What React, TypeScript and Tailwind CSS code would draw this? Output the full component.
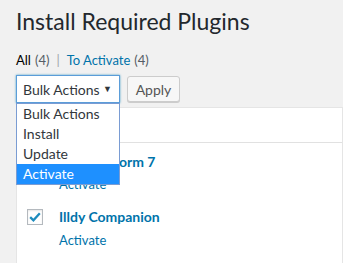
import React from "react"

const options = ["Bulk Actions", "Install", "Update", "Activate"]

function CheckIcon() {
  return (
    <svg viewBox="0 0 16 16" className="w-[14px] h-[14px]">
      <path d="M2.5 8.2 L6.2 11.8 L13.5 3.6" fill="none" stroke="#1e8cbe" strokeWidth="2.6" />
    </svg>
  )
}

export default function App() {
  return (
    <div className="relative w-[343px] h-[263px] overflow-hidden bg-[#f1f1f1] pl-4 text-[#23282d] font-['Lato',sans-serif]">
      <h1 className="pt-[6px] text-[23px] leading-[30px] font-normal">Install Required Plugins</h1>

      <div className="mt-[15px] flex items-center text-[13px] leading-[18px]">
        <span className="text-black">All</span>
        <span className="ml-1 text-[#555d66]">(4)</span>
        <span className="mx-[7px] text-[#a0a5aa]">|</span>
        <a className="text-[#0073aa]">To Activate</a>
        <span className="ml-1 text-[#555d66]">(4)</span>
      </div>

      <div className="mt-[6px] flex items-center gap-[7px]">
        <div className="w-[104px] h-[28px] flex items-center justify-between bg-white border border-[#5b9dd9] pl-[6px] pr-[7px] text-[14px] text-[#32373c] whitespace-nowrap shadow-[0_0_2px_rgba(30,140,190,0.8)]">
          <span>Bulk Actions</span>
          <span className="text-[9px] text-[#32373c]">▼</span>
        </div>
        <button className="w-[53px] h-[26px] rounded-[3px] border border-[#cccccc] bg-[#f7f7f7] text-[14px] text-[#555555] shadow-[0_1px_0_#cccccc]">
          Apply
        </button>
      </div>

      <div className="mt-[4px] bg-white border border-[#e5e5e5] h-[200px]">
        <div className="h-[35px] border-b border-[#e1e1e1]"></div>
        <div className="flex pt-[9px] h-[57px]">
          <div className="w-[42px]"></div>
          <div className="flex flex-col">
            <a className="text-[14px] leading-[20px] font-bold text-[#0073aa]">Contact Form 7</a>
            <a className="mt-[2px] text-[13px] leading-[20px] text-[#0073aa]">Activate</a>
          </div>
        </div>
        <div className="flex pt-[7px]">
          <div className="w-[42px] flex justify-start pl-[10px] pt-[2px]">
            <div className="w-[16px] h-[16px] border border-[#b4b9be] bg-white flex items-center justify-center shadow-[inset_0_1px_2px_rgba(0,0,0,0.1)]">
              <CheckIcon />
            </div>
          </div>
          <div className="flex flex-col">
            <a className="text-[14px] leading-[20px] font-bold text-[#0073aa]">Illdy Companion</a>
            <a className="mt-[3px] text-[13px] leading-[20px] text-[#0073aa]">Activate</a>
          </div>
        </div>
      </div>

      <ul className="absolute left-4 top-[103px] w-[104px] bg-white border border-[#7a9cd3] text-[14px] text-[#32373c]">
        {options.map((o) => (
          <li
            key={o}
            className={
              o === "Activate"
                ? "h-[20px] leading-[20px] pl-[6px] bg-[#1e90ff] text-white"
                : "h-[20px] leading-[20px] pl-[6px]"
            }
          >
            {o}
          </li>
        ))}
      </ul>
    </div>
  )
}
